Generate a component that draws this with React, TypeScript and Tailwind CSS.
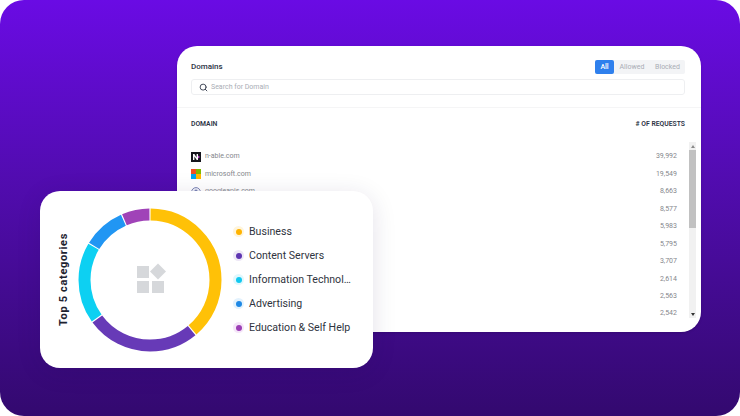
import { Search } from "lucide-react";

const rows = [
  { domain: "n-able.com", requests: "39,992", icon: "nable" },
  { domain: "microsoft.com", requests: "19,549", icon: "microsoft" },
  { domain: "googleapis.com", requests: "8,663", icon: "globe" },
  { domain: "", requests: "8,577" },
  { domain: "", requests: "5,983" },
  { domain: "", requests: "5,795" },
  { domain: "", requests: "3,707" },
  { domain: "", requests: "2,614" },
  { domain: "", requests: "2,563" },
  { domain: "", requests: "2,542" },
];

const segments = [
  { color: "#ffc107", from: 0.5, to: 139.5 },
  { color: "#673ab7", from: 140.5, to: 233.5 },
  { color: "#0dd0f2", from: 234.5, to: 300.5 },
  { color: "#2196f3", from: 301.5, to: 336 },
  { color: "#a043b8", from: 337, to: 359.5 },
];

const legend = [
  { label: "Business", dot: "bg-[#ffb300]", halo: "bg-[#fff5dc]" },
  { label: "Content Servers", dot: "bg-[#5e35b1]", halo: "bg-[#ede7f6]" },
  { label: "Information Technol…", dot: "bg-[#12c8f0]", halo: "bg-[#e0f8fd]" },
  { label: "Advertising", dot: "bg-[#1e88e5]", halo: "bg-[#e3f2fd]" },
  { label: "Education & Self Help", dot: "bg-[#9c3fb5]", halo: "bg-[#f5e6f9]" },
];

function DomainIcon({ icon }: { icon?: string }) {
  if (icon === "nable") {
    return (
      <svg width="10" height="10" viewBox="0 0 10 10">
        <rect width="10" height="10" fill="#15151c" />
        <path d="M2 8V2h1.4L5.6 5.6V2H7v6H5.7L3.4 4.4V8z" fill="#fff" />
        <path d="M7 3.6 9 5 7 6.4z" fill="#c94bd8" />
      </svg>
    );
  }
  if (icon === "microsoft") {
    return (
      <svg width="10" height="10" viewBox="0 0 10 10">
        <rect width="5" height="5" fill="#f25022" />
        <rect x="5" width="5" height="5" fill="#7fba00" />
        <rect y="5" width="5" height="5" fill="#00a4ef" />
        <rect x="5" y="5" width="5" height="5" fill="#ffb900" />
      </svg>
    );
  }
  if (icon === "globe") {
    return (
      <svg width="10" height="10" viewBox="0 0 10 10">
        <circle cx="5" cy="5" r="4.4" fill="#eef0f8" stroke="#7d86b5" strokeWidth="1" />
        <circle cx="5" cy="4" r="1.6" fill="#7d86b5" />
      </svg>
    );
  }
  return <span className="w-2.5 h-2.5" />;
}

function Donut() {
  return (
    <svg width="146" height="146" viewBox="0 0 146 146" className="shrink-0">
      <g transform="rotate(-90 73 73)">
        {segments.map((s) => (
          <circle
            key={s.color}
            cx="73"
            cy="73"
            r="65.5"
            fill="none"
            stroke={s.color}
            strokeWidth="12"
            pathLength={360}
            strokeDasharray={`${s.to - s.from} ${360 - (s.to - s.from)}`}
            strokeDashoffset={-s.from}
          />
        ))}
      </g>
      <g fill="#d6d8db">
        <rect x="60" y="59" width="12" height="12" />
        <rect x="60" y="74" width="12" height="12" />
        <rect x="75" y="74" width="12" height="12" />
        <path d="M81 56.5 89 64.5 81 72.5 73 64.5z" />
      </g>
    </svg>
  );
}

export default function App() {
  return (
    <div className="w-[740px] h-[416px] bg-white font-['Roboto',sans-serif] overflow-hidden">
      <div className="relative w-full h-full rounded-[24px] bg-gradient-to-b from-[#6a0be4] to-[#33096f] pt-[46px] pl-[177px] overflow-hidden">
        <div className="w-[524px] h-[286px] bg-white rounded-[20px] flex flex-col shadow-sm">
          <div className="pl-3.5 pr-4 pt-3.5 pb-3 border-b border-[#f5f5f6]">
            <div className="flex items-center justify-between h-3.5">
              <span className="text-[8px] font-medium text-[#2c3345]">Domains</span>
              <div className="flex h-3.5 rounded-[2px] bg-[#f3f4f6] text-[7px]">
                <span className="w-[19px] flex items-center justify-center rounded-[2px] bg-[#2f80ed] text-white font-medium">All</span>
                <span className="w-[36px] flex items-center justify-center text-[#a9adb5]">Allowed</span>
                <span className="w-[35px] flex items-center justify-center text-[#a9adb5]">Blocked</span>
              </div>
            </div>
            <div className="mt-[5px] h-4 flex items-center gap-[3px] rounded-[3px] border border-[#eeeff1] pl-[7px]">
              <Search size={9} strokeWidth={2.5} className="text-[#3b4252]" />
              <span className="text-[7px] text-[#a9adb5]">Search for Domain</span>
            </div>
          </div>
          <div className="flex items-center justify-between pl-3.5 pr-4 pt-3 text-[6.8px] font-semibold text-[#2c3345] leading-[9px]">
            <span>DOMAIN</span>
            <span># OF REQUESTS</span>
          </div>
          <div className="flex mt-[13px] pr-[5px] pb-[14px] flex-1 min-h-0">
            <div className="flex-1 pt-[6px] pl-3.5 pr-[12px]">
              {rows.map((r) => (
                <div key={r.requests} className="h-[17.45px] flex items-center justify-between text-[7px] text-[#85878c]">
                  <span className="flex items-center gap-1">
                    <DomainIcon icon={r.icon} />
                    {r.domain}
                  </span>
                  <span>{r.requests}</span>
                </div>
              ))}
            </div>
            <div className="w-[7px] bg-[#f1f1f1] flex flex-col items-center">
              <div className="h-2 flex items-center">
                <span className="border-x-[2px] border-x-transparent border-b-[3px] border-b-[#8a8a8a]" />
              </div>
              <div className="w-full h-[78px] bg-[#c1c1c1]" />
              <div className="mt-auto h-2 flex items-center">
                <span className="border-x-[2px] border-x-transparent border-t-[3px] border-t-[#333]" />
              </div>
            </div>
          </div>
        </div>

        <div className="absolute left-[40px] top-[191px] w-[333px] h-[177px] bg-white rounded-[20px] shadow-[0_4px_24px_rgba(30,10,70,0.12)] flex items-center">
          <span className="ml-[17px] w-3.5 [writing-mode:vertical-rl] rotate-180 text-center text-[11px] leading-[14px] font-bold tracking-[0.06em] text-[#1d2230]">
            Top 5 categories
          </span>
          <div className="ml-[6px]">
            <Donut />
          </div>
          <div className="ml-[10px] flex flex-col gap-[6px]">
            {legend.map((l) => (
              <div key={l.label} className="h-[18px] flex items-center gap-[5px] text-[10.6px] text-[#2f3440]">
                <span className={`w-[11px] h-[11px] rounded-full flex items-center justify-center ${l.halo}`}>
                  <span className={`w-[6px] h-[6px] rounded-full ${l.dot}`} />
                </span>
                {l.label}
              </div>
            ))}
          </div>
        </div>
      </div>
    </div>
  );
}
